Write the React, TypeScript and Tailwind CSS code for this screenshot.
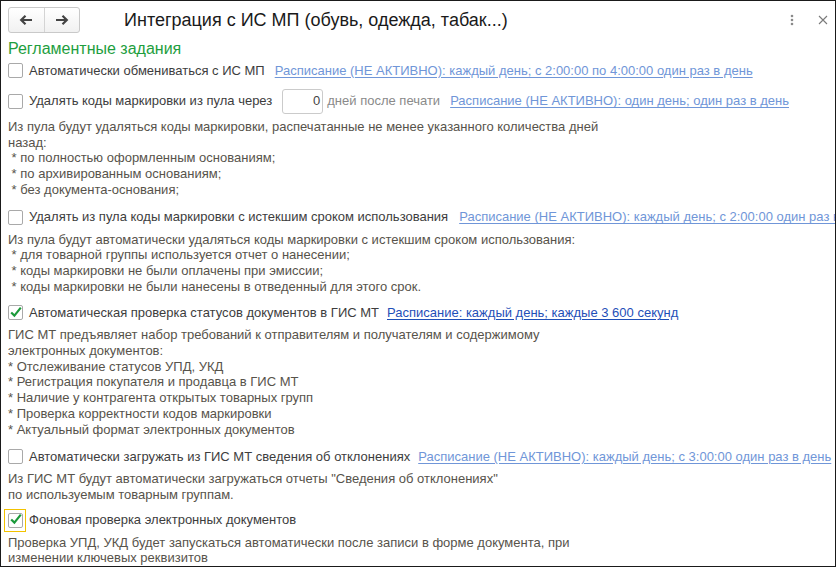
import { ReactNode } from "react";

const Check = ({ checked, focused }: { checked?: boolean; focused?: boolean }) => (
  <span
    className={
      "relative flex h-[23px] w-[22px] shrink-0 items-center justify-center " +
      (focused ? "border border-[#f2c200]" : "border border-transparent")
    }
  >
    <span className="flex h-[15px] w-[15px] items-center justify-center rounded-[2px] border border-[#a9a9a9] bg-white">
      {checked && (
        <svg width="15" height="14" viewBox="0 0 15 14" className="-mt-[2px] ml-[1px]">
          <path d="M1.5 7.5 L5.5 11.5 L13.5 1.5" fill="none" stroke="#1b9a3a" strokeWidth="2.7" />
        </svg>
      )}
    </span>
  </span>
);

const Link = ({ children, active }: { children: ReactNode; active?: boolean }) => (
  <a
    href="#"
    className={
      "underline underline-offset-2 " +
      (active ? "text-[#1f4fb8] decoration-[#1f4fb8]" : "text-[#7096d8] decoration-[#7096d8]")
    }
  >
    {children}
  </a>
);

const Row = ({
  checked,
  focused,
  label,
  children,
  className,
}: {
  checked?: boolean;
  focused?: boolean;
  label: string;
  children?: ReactNode;
  className?: string;
}) => (
  <div className={"flex h-[23px] items-center whitespace-nowrap " + (className ?? "")}>
    <span className="-ml-[4px]">
      <Check checked={checked} focused={focused} />
    </span>
    <span className="ml-[3px] text-[#3d3d3d]">{label}</span>
    {children}
  </div>
);

const Desc = ({ lines, className }: { lines: string[]; className?: string }) => (
  <div className={"leading-[15.7px] text-[#57534b] whitespace-pre " + (className ?? "")}>
    {lines.map((l, i) => (
      <div key={i}>{l}</div>
    ))}
  </div>
);

export default function App() {
  return (
    <div className="h-[567px] w-[836px] overflow-hidden border border-[#1a1a1a] bg-white font-['Liberation_Sans',Arial,sans-serif] text-[13px]">
      <div className="flex h-[38px] items-center pl-[7px] pr-[6px]">
        <div className="flex h-[26px] w-[72px] overflow-hidden rounded-[3px] border border-[#c9c9c9] bg-gradient-to-b from-white to-[#f1f1f1]">
          <button className="flex flex-1 items-center justify-center border-r border-[#d4d4d4]">
            <svg width="14" height="12" viewBox="0 0 14 12">
              <path d="M13 6 H3 M6.5 1.8 L2.2 6 L6.5 10.2" fill="none" stroke="#444" strokeWidth="2.2" />
            </svg>
          </button>
          <button className="flex flex-1 items-center justify-center">
            <svg width="14" height="12" viewBox="0 0 14 12">
              <path d="M1 6 H11 M7.5 1.8 L11.8 6 L7.5 10.2" fill="none" stroke="#444" strokeWidth="2.2" />
            </svg>
          </button>
        </div>
        <h1 className="ml-[44px] text-[18px] text-[#1a1a1a]">Интеграция с ИС МП (обувь, одежда, табак...)</h1>
        <div className="ml-auto flex items-center gap-[24px] pr-[1px]">
          <svg width="4" height="12" viewBox="0 0 4 12">
            <circle cx="2" cy="2" r="1.3" fill="#8a8a8a" />
            <circle cx="2" cy="6" r="1.3" fill="#8a8a8a" />
            <circle cx="2" cy="10" r="1.3" fill="#8a8a8a" />
          </svg>
          <svg width="10" height="10" viewBox="0 0 10 10">
            <path d="M1 1 L9 9 M9 1 L1 9" stroke="#7a7a7a" strokeWidth="1.1" />
          </svg>
        </div>
      </div>

      <div className="pl-[7px]">
        <div className="h-[20px] text-[16px] leading-[20px] text-[#1e9e3e]">Регламентные задания</div>

        <Row label="Автоматически обмениваться с ИС МП">
          <span className="ml-[10px]">
            <Link>Расписание (НЕ АКТИВНО): каждый день; с 2:00:00 по 4:00:00 один раз в день</Link>
          </span>
        </Row>

        <Row label="Удалять коды маркировки из пула через" className="mt-[6px] h-[26px]">
          <span className="ml-[10px] flex h-[25px] w-[41px] items-center justify-end rounded-[3px] border border-[#cbcbcb] pr-[2px] text-[#444]">
            0
          </span>
          <span className="ml-[4px] text-[#8a8a8a]">дней после печати</span>
          <span className="ml-[10px]">
            <Link>Расписание (НЕ АКТИВНО): один день; один раз в день</Link>
          </span>
        </Row>

        <Desc
          className="mt-[5px]"
          lines={[
            "Из пула будут удаляться коды маркировки, распечатанные не менее указанного количества дней",
            "назад:",
            " * по полностью оформленным основаниям;",
            " * по архивированным основаниям;",
            " * без документа-основания;",
          ]}
        />

        <Row label="Удалять из пула коды маркировки с истекшим сроком использования" className="mt-[8px]">
          <span className="ml-[11px]">
            <Link>Расписание (НЕ АКТИВНО): каждый день; с 2:00:00 один раз в день</Link>
          </span>
        </Row>

        <Desc
          className="mt-[3px]"
          lines={[
            "Из пула будут автоматически удаляться коды маркировки с истекшим сроком использования:",
            " * для товарной группы используется отчет о нанесении;",
            " * коды маркировки не были оплачены при эмиссии;",
            " * коды маркировки не были нанесены в отведенный для этого срок.",
          ]}
        />

        <Row checked label="Автоматическая проверка статусов документов в ГИС МТ" className="mt-[7px]">
          <span className="ml-[8px]">
            <Link active>Расписание: каждый день; каждые 3 600 секунд</Link>
          </span>
        </Row>

        <Desc
          className="mt-[3px]"
          lines={[
            "ГИС МТ предъявляет набор требований к отправителям и получателям и содержимому",
            "электронных документов:",
            "* Отслеживание статусов УПД, УКД",
            "* Регистрация покупателя и продавца в ГИС МТ",
            "* Наличие у контрагента открытых товарных групп",
            "* Проверка корректности кодов маркировки",
            "* Актуальный формат электронных документов",
          ]}
        />

        <Row label="Автоматически загружать из ГИС МТ сведения об отклонениях" className="mt-[8px]">
          <span className="ml-[8px]">
            <Link>Расписание (НЕ АКТИВНО): каждый день; с 3:00:00 один раз в день</Link>
          </span>
        </Row>

        <Desc
          className="mt-[3px]"
          lines={['Из ГИС МТ будут автоматически загружаться отчеты "Сведения об отклонениях"', "по используемым товарным группам."]}
        />

        <Row checked focused label="Фоновая проверка электронных документов" className="mt-[6px]" />

        <Desc
          className="mt-[3px]"
          lines={[
            "Проверка УПД, УКД будет запускаться автоматически после записи в форме документа, при",
            "изменении ключевых реквизитов",
          ]}
        />
      </div>
    </div>
  );
}
